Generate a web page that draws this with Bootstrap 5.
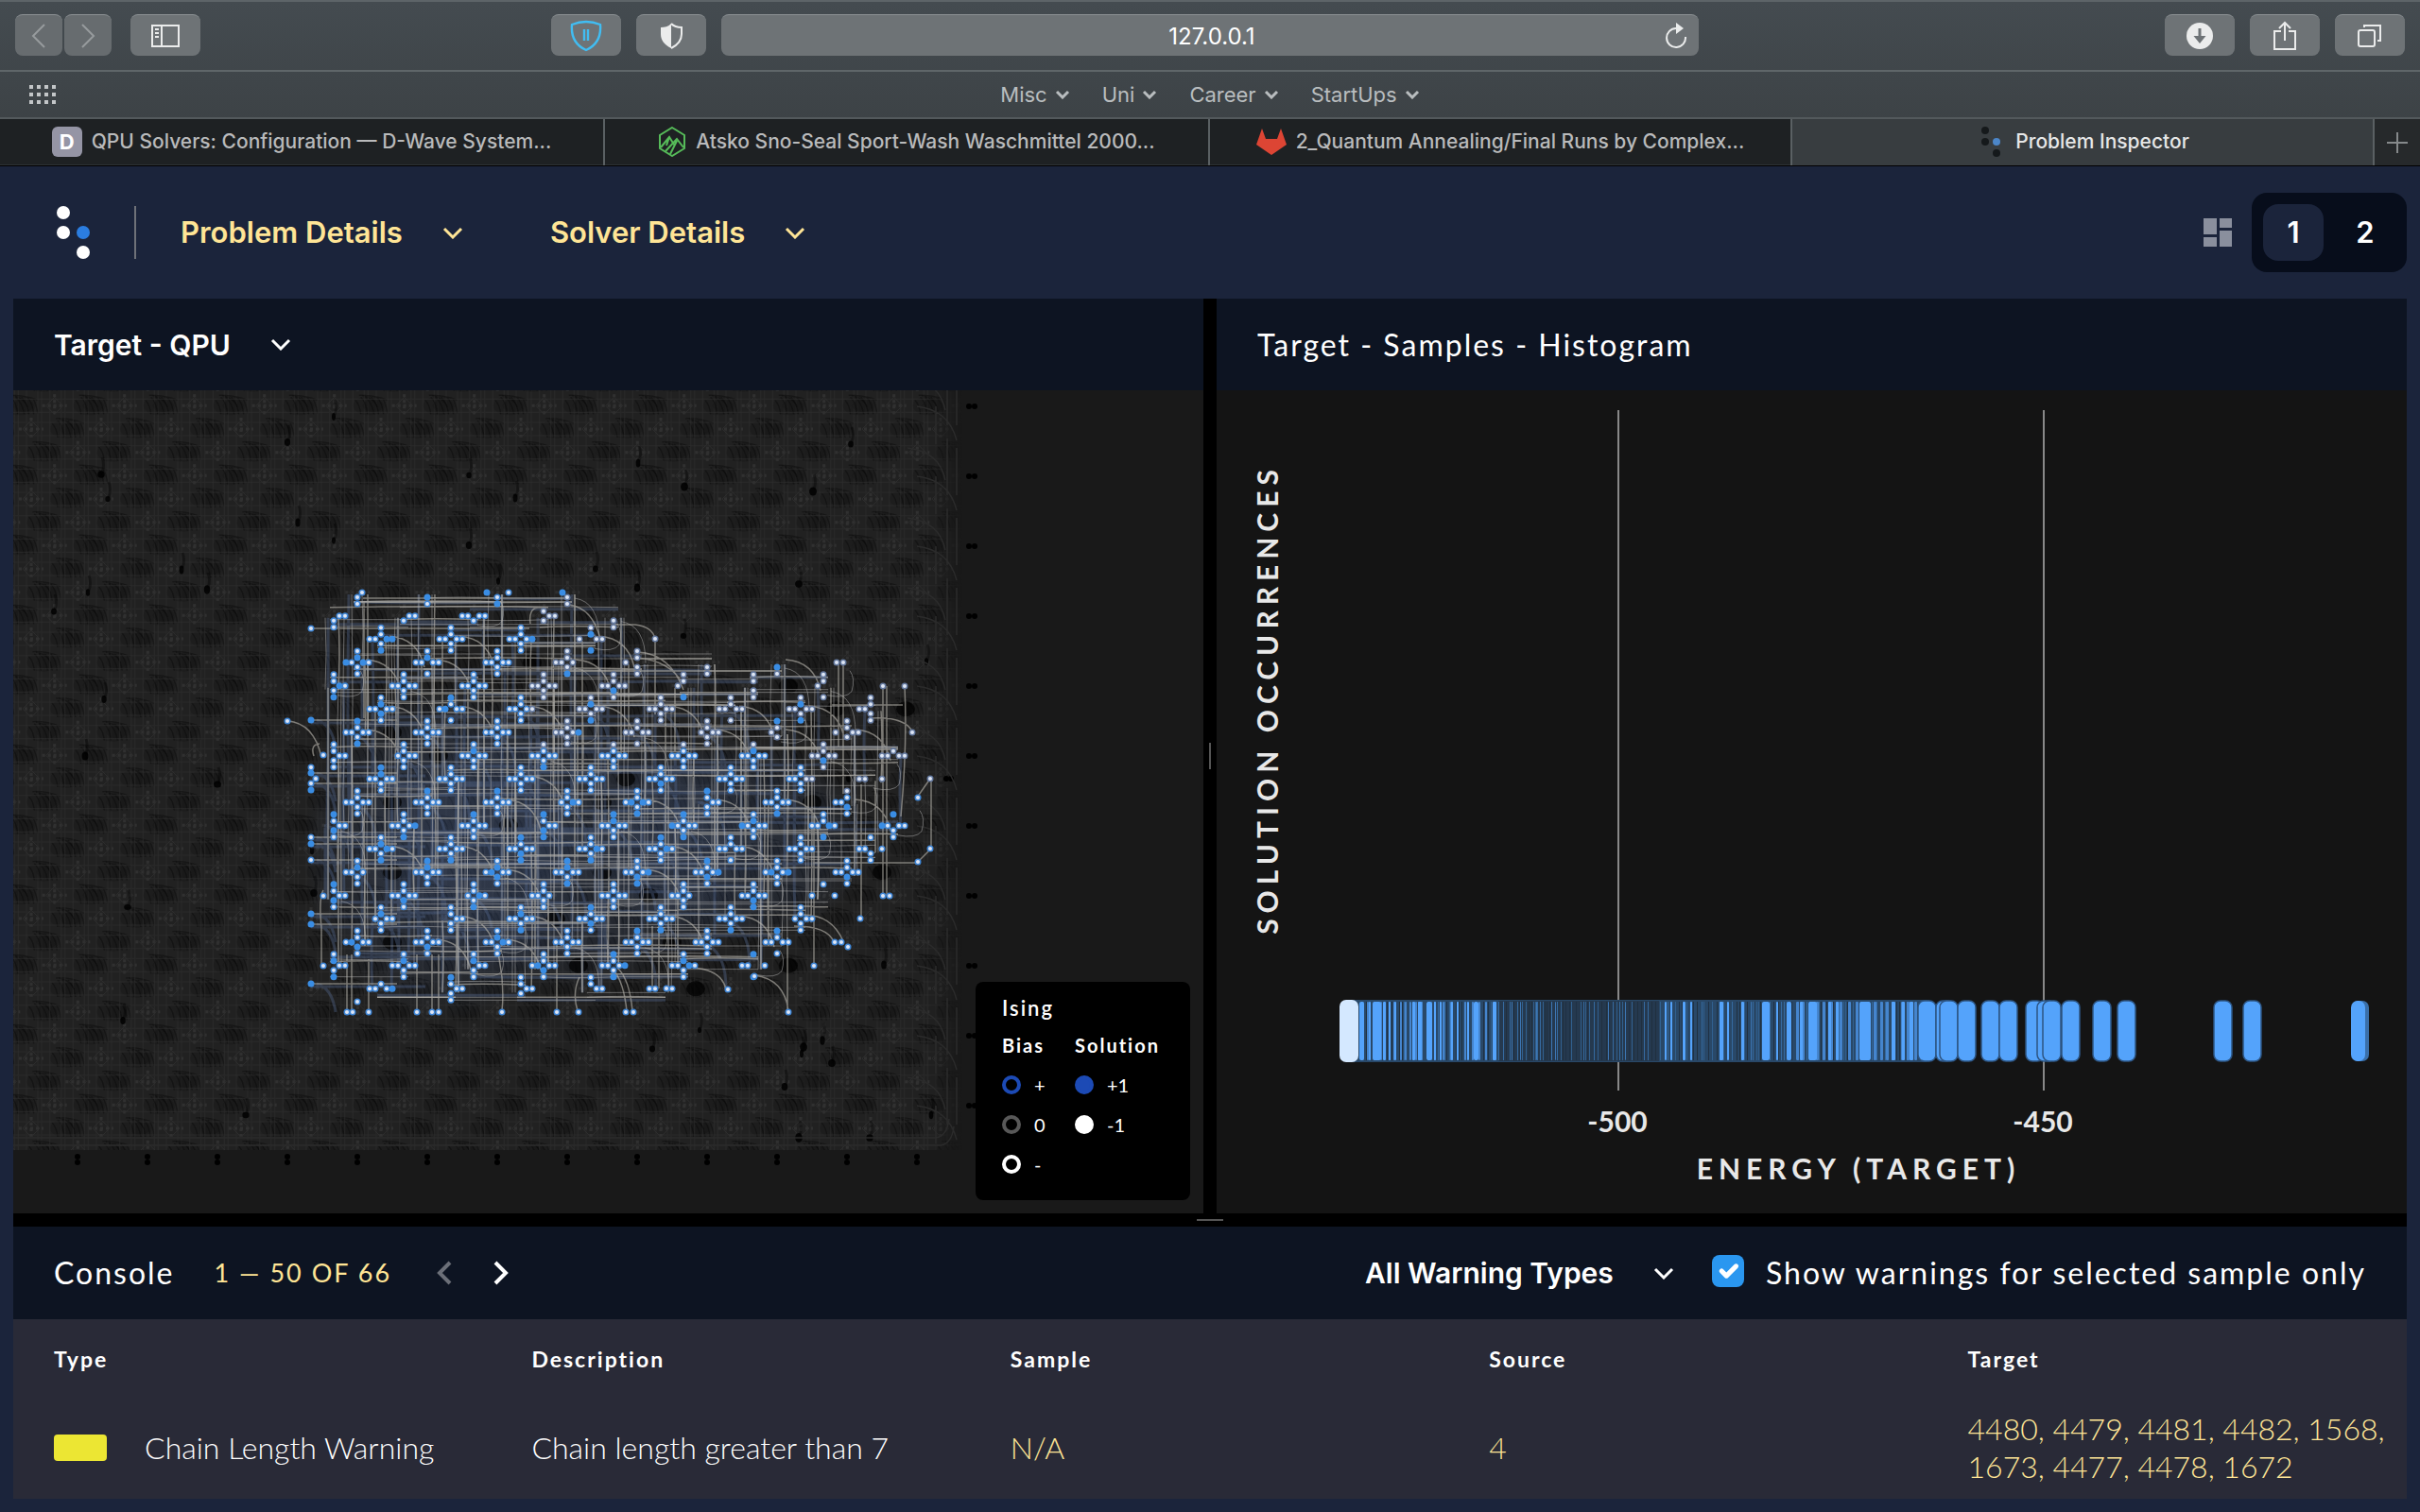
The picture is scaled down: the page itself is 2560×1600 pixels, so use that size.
<!DOCTYPE html>
<html lang="en">
<head>
<meta charset="utf-8">
<meta name="viewport" content="width=device-width, initial-scale=1">
<title>Problem Inspector</title>
<link href="https://cdn.jsdelivr.net/npm/bootstrap@5.3.0/dist/css/bootstrap.min.css" rel="stylesheet">
<style>
  :root { --ui: Inter, Roboto, sans-serif; --brand: Lato, "Open Sans", sans-serif; --navy: #1b243b; --ink: #0d1422; --gold: #ffe596; }
  body { font-family: var(--brand); background: var(--navy); color: #fff; min-height: 100vh; }
  svg { display: block; }
  /* browser chrome */
  .chrome { font-family: var(--ui); font-size: 22px; line-height: 28px; background: linear-gradient(#444b50, #3a3f42); border-top: 2px solid #5d6468; }
  .toolbar { display: grid; grid-template-columns: 583fr 1214fr 763fr; height: 74px; padding-bottom: 2px; border-bottom: 2px solid #5f6669; }
  .tool { width: 74px; height: 44px; padding: 0; border: 0; border-top: 1px solid #8b9093; border-radius: 8px; background: #6e7376; color: #ebecec; display: flex; align-items: center; justify-content: center; }
  .tool-nav { width: 50px; color: #979b9d; background: #676c6f; margin-right: 2px; }
  .tool-nav + .tool-nav { margin-right: 20px; }
  .address { height: 44px; border-top: 1px solid #8b9093; border-radius: 8px; background: #6e7376; }
  .address input { background: none; border: 0; color: #fff; font-size: 24px; line-height: 44px; text-align: center; outline: 0; min-width: 0; padding: 2px 0 0 52px; }
  .address button { color: #ebecec; width: 48px; }
  .favs { height: 48px; color: #b9bdbf; }
  .favs a { color: inherit; text-decoration: none; display: flex; align-items: center; gap: 8px; }
  .tabs { height: 52px; font-size: 21px; font-weight: 500; border-top: 2px solid #53595c; border-bottom: 1px solid #000; background: #1e2123; box-shadow: inset 0 -1px #2e3235; }
  .tab-item { flex: 616 1 0; min-width: 0; color: #b9babb; text-decoration: none; border-right: 2px solid #5a6063; gap: 10px; padding-bottom: 1px; }
  .tab-wide { flex-grow: 640; }
  .tab-on { background: #383d40; color: #e6e7e7; }
  .tab-add { width: 48px; flex: none; color: #85898b; background: #26292b; border: 0; padding: 0; }
  .fav-d { width: 32px; height: 32px; border-radius: 6px; background: #9595a5; color: #fff; font-size: 22px; font-weight: 700; line-height: 32px; text-align: center; }
  /* app */
  .appbar { height: 140px; padding: 0 14px 0 60px; font-family: var(--ui); font-size: 31px; }
  .appbar button { font-weight: 600; }
  .rule { width: 2px; height: 56px; background: #6e7178; margin: 0 47px 0 46px; }
  .menu-btn { color: var(--gold); background: none; border: 0; padding: 0; display: flex; align-items: center; gap: 42px; margin-right: 92px; }
  .views { background: #070d1b; border-radius: 16px; padding: 12px; gap: 12px; margin-left: 21px; }
  .views button { width: 64px; height: 60px; border: 0; border-radius: 16px; background: none; color: #fff; padding: 0; }
  .views .on { background: var(--navy); }
  .stage { padding: 0 14px 14px; }
  .pane-head { height: 97px; background: var(--ink); padding: 0 43px; font-size: 32px; letter-spacing: 2px; }
  .pick { font: 600 30px/40px var(--ui); letter-spacing: 0; color: #fff; border: 0; appearance: none; padding: 0 64px 0 0; outline: 0;
    background: url("data:image/svg+xml,%3Csvg xmlns='http://www.w3.org/2000/svg' width='22' height='13'%3E%3Cpath d='M2 2l9 9 9-9' fill='none' stroke='%23fff' stroke-width='3'/%3E%3C/svg%3E") no-repeat right center; }
  .pick option { color: #000; }
  .split-v { width: 14px; background: #000; flex: none; }
  .split-v i { width: 2px; height: 28px; background: #555; }
  .split-h { height: 14px; background: #000; }
  .split-h i { width: 28px; height: 2px; background: #555; }
  .view { background: #191919; min-height: 400px; overflow: hidden; }
  .view > svg { position: absolute; inset: 0; width: 100%; height: 100%; }
  .chart { background: #141414; }
  .chart text { fill: #e8e8e8; font-family: var(--brand); font-weight: 700; font-size: 30px; text-anchor: middle; }
  .chart .axis { letter-spacing: 6px; }
  .key-box { position: absolute; right: 14px; bottom: 14px; width: 227px; padding: 10px 28px 17px; background: #000; border-radius: 8px; font-size: 20px; line-height: 42px; }
  .key-box h2 { font-size: 22px; line-height: 36px; font-weight: 600; letter-spacing: 2px; margin: 0; }
  .key-box h3 { font-size: 20px; line-height: 42px; font-weight: 700; letter-spacing: 2px; margin: 0; }
  .key-box li { display: flex; align-items: center; gap: 14px; }
  .ring { width: 20px; height: 20px; border: 4px solid #1c4ab5; border-radius: 50%; }
  .ring-zero { border-color: #585858; }
  .ring-neg { border-color: #fff; }
  .fill-pos { background: #1c4ab5; }
  .fill-neg { background: #fff; border-color: #fff; }
  .key-col { width: 77px; }
  .console-head { height: 98px; }
  .count { color: var(--gold); font-size: 27px; margin: 0 48px 0 42px; }
  .pager { background: none; border: 0; padding: 0; color: #fff; }
  .pager:disabled { color: #6b6f78; }
  .pager + .pager { margin-left: 44px; }
  .only { width: 34px; height: 34px; margin: 0 23px 4px 40px; border: 0; border-radius: 5px; flex: none; }
  .only:checked { background-color: #2a97f0; }
  .log { width: 100%; table-layout: fixed; background: #292a37; font-size: 32px; line-height: 40px; }
  .log th { font-size: 23px; line-height: 30px; font-weight: 700; letter-spacing: 2px; height: 84px; padding: 0 0 0 43px; width: 20%; }
  .log th + th, .log td + td { padding-left: 42px; }
  .log td { height: 106px; padding: 0 0 3px 43px; font-weight: 300; }
  .log a { color: #ffe596; text-decoration: none; }
  .swatch { width: 56px; height: 28px; border-radius: 4px; background: #ece633; margin-right: 40px; }
</style>
<script src="https://cdn.jsdelivr.net/npm/bootstrap@5.3.0/dist/js/bootstrap.bundle.min.js"></script>
</head>
<body class="d-flex flex-column">
<header class="chrome">
  <div class="toolbar align-items-center">
    <div class="d-flex align-items-center ps-3">
      <button class="tool tool-nav" aria-label="Back"><svg width="16" height="26" fill="none" stroke="currentColor" stroke-width="2"><path d="M14 1 2 13l12 12"/></svg></button>
      <button class="tool tool-nav" aria-label="Forward"><svg width="16" height="26" fill="none" stroke="currentColor" stroke-width="2"><path d="M2 1l12 12L2 25"/></svg></button>
      <button class="tool" aria-label="Sidebar"><svg width="30" height="24" fill="none" stroke="currentColor" stroke-width="2"><path d="M1 1h28v22H1zM11 1v22M4 5h4M4 9h4M4 13h4"/></svg></button>
    </div>
    <div class="d-flex gap-3 align-items-center">
      <button class="tool" aria-label="Privacy shield"><svg width="34" height="34" fill="none" stroke="#41bdf2" stroke-width="2.4"><path d="M17 2c5 0 10 1 15 3 1 12-4 22-15 27C6 27 1 17 2 5c5-2 10-3 15-3zM15 10v12M19 10v12"/></svg></button>
      <button class="tool" aria-label="Privacy report"><svg width="24" height="28"><path d="M12 1v26C4 23 1 18 1 12V5c4 0 8-1 11-4z" fill="#ebecec"/><path d="M12 1c3 3 7 4 11 4v7c0 6-3 11-11 15" fill="none" stroke="#ebecec" stroke-width="2"/></svg></button>
      <div class="address d-flex flex-grow-1">
        <input class="flex-grow-1" aria-label="Address" value="127.0.0.1">
        <button class="btn p-0 border-0 d-flex align-items-center justify-content-center" aria-label="Reload"><svg width="24" height="28" fill="none" stroke="currentColor" stroke-width="2"><path d="M12 6a10 10 0 1 0 10 9"/><path d="M12 0l8 6-8 6z" fill="currentColor" stroke="none"/></svg></button>
      </div>
    </div>
    <div class="d-flex gap-3 justify-content-end pe-3">
      <button class="tool" aria-label="Downloads"><svg width="28" height="28"><circle cx="14" cy="14" r="14" fill="#ebecec"/><path d="M12.500 6h3v8h5L14 22l-6.500-8h5z" fill="#6e7376"/></svg></button>
      <button class="tool" aria-label="Share"><svg width="24" height="32" fill="none" stroke="currentColor" stroke-width="2"><path d="M8 11H1v19h22V11h-7M12 21V2M6 8l6-6 6 6"/></svg></button>
      <button class="tool" aria-label="Tab overview"><svg width="26" height="26" fill="none" stroke="currentColor" stroke-width="2"><rect x="1" y="7" width="17" height="17" rx="2"/><path d="M7 4V2h17v16h-3"/></svg></button>
    </div>
  </div>
  <nav class="favs position-relative d-flex align-items-center justify-content-center">
    <svg class="position-absolute top-50 start-0 translate-middle-y ms-4" width="38" height="22" fill="#c3c6c8"><path d="M7 1h4v4H7zM15 1h4v4h-4zM23 1h4v4h-4zM31 1h4v4h-4zM7 9h4v4H7zM15 9h4v4h-4zM23 9h4v4h-4zM31 9h4v4h-4zM7 17h4v4H7zM15 17h4v4h-4zM23 17h4v4h-4zM31 17h4v4h-4z"/></svg>
    <div class="d-flex" style="gap:34px">
      <a href="#">Misc <svg width="16" height="10" fill="none" stroke="currentColor" stroke-width="3"><path d="M2 2l6 6 6-6"/></svg></a>
      <a href="#">Uni <svg width="16" height="10" fill="none" stroke="currentColor" stroke-width="3"><path d="M2 2l6 6 6-6"/></svg></a>
      <a href="#">Career <svg width="16" height="10" fill="none" stroke="currentColor" stroke-width="3"><path d="M2 2l6 6 6-6"/></svg></a>
      <a href="#">StartUps <svg width="16" height="10" fill="none" stroke="currentColor" stroke-width="3"><path d="M2 2l6 6 6-6"/></svg></a>
    </div>
  </nav>
  <nav class="tabs d-flex">
    <a href="#" class="tab-item tab-wide d-flex align-items-center justify-content-center"><span class="fav-d">D</span>QPU Solvers: Configuration — D-Wave System...</a>
    <a href="#" class="tab-item tab-wide d-flex align-items-center justify-content-center"><svg width="30" height="32" fill="none" stroke="#56bb59" stroke-width="2"><path d="M15 1l13 8v14l-13 8-13-8V9z"/><path d="M3 22l9-11 5 8M8 26l12-13 7 9M13 29l7-14M12 11l-3 9" /></svg>Atsko Sno-Seal Sport-Wash Waschmittel 2000...</a>
    <a href="#" class="tab-item d-flex align-items-center justify-content-center"><svg width="32" height="30" fill="#dd4534"><path d="M6 1l4 11h12l4-11 6 17-16 11L0 18z"/></svg>2_Quantum Annealing/Final Runs by Complex...</a>
    <a href="#" class="tab-item tab-on d-flex align-items-center justify-content-center"><svg width="32" height="32"><g fill="#15191b"><circle cx="10" cy="4" r="4"/><circle cx="10" cy="16" r="4"/><circle cx="22" cy="28" r="4"/></g><circle cx="22" cy="16" r="4" fill="#4c86c8"/></svg>Problem Inspector</a>
    <button class="tab-add d-flex align-items-center justify-content-center" aria-label="New tab"><svg width="22" height="22" stroke="currentColor" stroke-width="2"><path d="M11 0v22M0 11h22"/></svg></button>
  </nav>
</header>

<nav class="appbar d-flex align-items-center">
  <svg width="36" height="56" fill="#fff"><circle cx="7" cy="7" r="7"/><circle cx="7" cy="28" r="7"/><circle cx="28" cy="28" r="7" fill="#2b7de0"/><circle cx="28" cy="49" r="7"/></svg>
  <div class="rule"></div>
  <button class="menu-btn">Problem Details <svg width="22" height="13" fill="none" stroke="currentColor" stroke-width="3"><path d="M2 2l9 9 9-9"/></svg></button>
  <button class="menu-btn">Solver Details <svg width="22" height="13" fill="none" stroke="currentColor" stroke-width="3"><path d="M2 2l9 9 9-9"/></svg></button>
  <svg class="ms-auto" width="30" height="30" fill="#8a8f9d"><path d="M0 0h14v17H0zM17 0h13v10H17zM0 20h14v10H0zM17 13h13v17H17z"/></svg>
  <div class="views d-flex"><button class="on">1</button><button>2</button></div>
</nav>

<main class="stage d-flex flex-column flex-grow-1">
  <div class="d-flex flex-grow-1">
    <section class="d-flex flex-column" style="flex:1 1 0">
      <div class="pane-head d-flex align-items-center"><select class="pick" aria-label="Left view"><option>Target - QPU</option></select></div>
      <div class="view flex-grow-1 position-relative">
        <svg id="qpu" viewBox="14 413 1259 871" preserveAspectRatio="xMinYMin slice">
          <defs>
            <pattern id="weave" width="74" height="74" patternUnits="userSpaceOnUse" patternTransform="translate(403 676)"></pattern>
            <linearGradient id="fadeX" x1="0" x2="1" y1="0" y2="0"><stop offset=".965" stop-color="#fff"/><stop offset="1" stop-color="#fff" stop-opacity="0"/></linearGradient>
            <mask id="edge"><rect x="14" y="413" width="1004" height="804" fill="url(#fadeX)"/></mask>
            <radialGradient id="haze"><stop offset="0" stop-color="#5c7fc4" stop-opacity=".16"/><stop offset=".7" stop-color="#5c7fc4" stop-opacity=".1"/><stop offset="1" stop-color="#5c7fc4" stop-opacity="0"/></radialGradient>
          </defs>
          <rect x="14" y="413" width="1004" height="804" fill="url(#weave)" mask="url(#edge)"/>
        </svg>
        <div class="key-box">
          <h2>Ising</h2>
          <div class="d-flex">
            <div class="key-col"><h3>Bias</h3><ul class="list-unstyled m-0"><li><span class="ring"></span>+</li><li><span class="ring ring-zero"></span>0</li><li><span class="ring ring-neg"></span>-</li></ul></div>
            <div><h3>Solution</h3><ul class="list-unstyled m-0"><li><span class="ring fill-pos"></span>+1</li><li><span class="ring fill-neg"></span>-1</li></ul></div>
          </div>
        </div>
      </div>
    </section>
    <div class="split-v d-flex align-items-center justify-content-center"><i></i></div>
    <section class="d-flex flex-column" style="flex:1 1 0">
      <div class="pane-head d-flex align-items-center">Target - Samples - Histogram</div>
      <div class="view chart flex-grow-1 position-relative">
        <svg id="hist" viewBox="1287 413 1259 871" preserveAspectRatio="xMidYMid meet">
          <path d="M1712 434V1154M2162 434V1154" stroke="#888" stroke-width="2"/>
          <g id="bars"></g>
          <text x="1711" y="1198">-500</text><text x="2161" y="1198">-450</text>
          <text class="axis" x="1966" y="1248">ENERGY (TARGET)</text>
          <text class="axis" transform="translate(1352 740) rotate(-90)">SOLUTION OCCURRENCES</text>
        </svg>
      </div>
    </section>
  </div>
  <div class="split-h d-flex align-items-center justify-content-center"><i></i></div>
  <section>
    <div class="pane-head console-head d-flex align-items-center">
      <span>Console</span><span class="count">1 — 50 OF 66</span>
      <button class="pager" disabled aria-label="Previous"><svg width="16" height="26" fill="none" stroke="currentColor" stroke-width="4"><path d="M14 2 3 13l11 11"/></svg></button>
      <button class="pager" aria-label="Next"><svg width="16" height="26" fill="none" stroke="currentColor" stroke-width="4"><path d="M2 2l11 11L2 24"/></svg></button>
      <select class="pick ms-auto" aria-label="Warning type"><option>All Warning Types</option></select>
      <input class="form-check-input only" type="checkbox" id="only" checked><label for="only">Show warnings for selected sample only</label>
    </div>
    <table class="log">
      <thead><tr><th>Type</th><th>Description</th><th>Sample</th><th>Source</th><th>Target</th></tr></thead>
      <tbody><tr>
        <td><div class="d-flex align-items-center"><span class="swatch"></span>Chain Length Warning</div></td>
        <td>Chain length greater than 7</td><td><a href="#">N/A</a></td><td><a href="#">4</a></td>
        <td><a href="#">4480, 4479, 4481, 4482, 1568, 1673, 4477, 4478, 1672</a></td>
      </tr></tbody>
    </table>
  </section>
</main>

<script>
let seed = 11;
const rnd = () => (seed = (seed * 16807) % 2147483647) / 2147483647;
const pick = a => a[Math.floor(rnd() * a.length)];
const add = (id, s) => document.getElementById(id).insertAdjacentHTML('beforeend', s);
const S = 74 / 3;

// faint fabric of unused couplers
let w = '<rect width="74" height="74" fill="#212121"/>', base = [[0, 0], [2 * S, S], [S, 2 * S]];
for (const [bx, by] of base) for (const dx of [-74, 0, 74]) for (const dy of [-74, 0, 74]) {
  const x = bx + dx, y = by + dy;
  w += `<g fill="#000"><ellipse cx="${x + 37}" cy="${y}" rx="17" ry="10" opacity=".13"/><ellipse cx="${x + 41}" cy="${y}" rx="11" ry="7" opacity=".13"/></g>`;
  w += `<path d="M${x + 22} ${y - 6}q5 5 6 15M${x + 28} ${y - 9}q6 6 7 18M${x + 33} ${y - 9}q7 6 9 18M${x + 39} ${y - 9}q6 6 8 18M${x + 45} ${y - 9}q6 6 7 18M${x + 51} ${y - 8}q4 6 5 16M${x + 26} ${y - 11}q14 -1 30 5M${x + 5} ${y + 14}q12 2 16 12" fill="none" stroke="#080808" stroke-width="1.500" opacity=".42"/>`;
  w += `<path d="M${x - 13} ${y}h26M${x} ${y - 12}v24" stroke="#303030" stroke-width="3" stroke-dasharray="3 3"/><path d="M${x - 9} ${y}l9-9 9 9-9 9z" fill="none" stroke="#2c2c2c"/><path d="M${x - 37} ${y + 7}h74M${x - 37} ${y - 7}h74M${x - 5} ${y - 37}v74M${x + 7} ${y - 37}v74M${x + 11} ${y - 37}v74" stroke="#2c2c2c" opacity=".6"/>`;
}
document.getElementById('weave').innerHTML = w;

let g = '';
// missing qubits
const holes = [[353, 441], [114, 528], [107, 502], [304, 468], [57, 647], [192, 603], [93, 627], [219, 624], [496, 503], [545, 527], [496, 577], [630, 602], [315, 553], [353, 572], [674, 622], [527, 615], [332, 945], [330, 900], [845, 618], [135, 960], [90, 800], [230, 830], [675, 490], [724, 515], [860, 520], [900, 470], [723, 673], [850, 1108], [870, 1101], [848, 1115], [880, 1125], [830, 1150], [920, 1204], [845, 1204], [935, 1021], [690, 1110], [740, 1090], [260, 1180], [110, 740], [130, 1080], [980, 700], [985, 1180], [898, 823]];
for (const [x, y] of holes) g += `<ellipse cx="${x}" cy="${y}" rx="${2 + rnd() * 2}" ry="${3 + rnd() * 2}" fill="#000" opacity=".85"/><path d="M${x + 1} ${y - 18}q3 8 0 16" stroke="#000" stroke-width="3" fill="none" opacity=".35"/>`;
// border contacts
for (let y = 430; y < 1180; y += 74) g += `<circle cx="1025" cy="${y}" r="3"/><circle cx="1031" cy="${y}" r="3"/>`;
for (let x = 82; x < 980; x += 74) g += `<circle cx="${x}" cy="1224" r="3"/><circle cx="${x}" cy="1230" r="3"/>`;
g += '<circle cx="1001" cy="824" r="3"/><circle cx="1006" cy="824" r="3"/>';
let loops = '';
for (let y = 430; y < 1190; y += 74) loops += `M960 ${y - 30}q34 4 40 34M970 ${y}q34 4 42 36M1012 ${y - 30}v50M1002 ${y - 40}v60M990 ${y}v40`;
g += `<path d="${loops}M14 1212H995q12-2 14-20M14 1204H990q12-2 14-20" fill="none" stroke="#2b2b2b" stroke-width="1.500"/>`;

// unit cells in use: first column and number of cells for each lattice row
const rows = [[378, 4], [353, 5], [403, 4], [378, 7], [353, 8], [403, 8], [378, 8], [353, 9], [403, 8], [378, 8], [353, 9], [403, 8], [378, 8], [353, 8], [403, 7], [378, 7], [353, 7], [403, 5]];
const partial = { '0,0': 'cd', '0,1': 'cd', '0,2': 'cd', '0,3': 'cd', '1,0': 'yzcd', '1,1': 'yzc', '1,2': 'wxyzc', '1,3': 'bcyz', '1,4': 'cd', '2,3': 'abyzwd', '3,4': 'abcdw', '3,5': 'cd', '3,6': 'cd', '4,5': 'abxd', '4,6': 'abcd', '4,7': 'abxd', '5,7': 'abwxcd', '6,7': 'abwyzc', '6,6': 'abxc', '7,8': 'bwxyz', '8,7': 'wxz', '9,7': 'abwxcd', '10,8': 'awxyzcd', '11,7': 'awxzcd', '13,7': 'awz', '16,6': 'awxzd', '17,0': 'bwxyz', '17,1': 'abcdyz', '17,2': 'abcyz', '17,3': 'abyz', '17,4': 'wxz' };
for (const k of [4, 7, 10, 13, 16]) partial[k + ',0'] = 'abcdyz';
const off = { a: [0, -12], b: [0, -5], c: [0, 5], d: [0, 12], w: [-12, 0], x: [-6, 0], y: [6, 0], z: [12, 0] };
const cells = [], at = new Set();
rows.forEach(([x0, n], k) => { for (let i = 0; i < n; i++) { const c = { k, i, x: x0 + 74 * i, y: 627 + S * k }; cells.push(c); at.add(Math.round(c.x) + ',' + k); } });
const has = (x, k) => at.has(Math.round(x) + ',' + k);

g += '<ellipse cx="470" cy="900" rx="150" ry="180" fill="url(#haze)"/><ellipse cx="590" cy="900" rx="220" ry="150" fill="url(#haze)"/><ellipse cx="770" cy="890" rx="150" ry="110" fill="url(#haze)"/>';
for (const c of cells) if (rnd() < .22 && c.k) g += `<ellipse cx="${c.x + 37}" cy="${c.y}" rx="10" ry="8" fill="#000" opacity=".7"/>`;
let thin = '', bold = '', blue = '';
for (const c of cells) {
  for (let r = 0; r < 4; r++) {
    const n = pick([1, 1, 2, 3]), o = c.k ? pick([-9, -7, -4, 4, 7, 9, 12]) : pick([6, 10]);
    if (has(c.x + 74 * n, c.k)) { const s = `M${c.x - 4} ${c.y + o}q${37 * n} ${pick([-2, 0, 0, 2])} ${74 * n + 9} 0`; if (r > 1) thin += s; else if (r) bold += s; else blue += s; }
    const m = pick([1, 1, 2, 3]), p = pick([-9, -6, 5, 8, 11]);
    if (has(c.x, c.k + 3 * m)) { const s = `M${c.x + p} ${c.y + 2}q${pick([-2, 0, 0, 2])} ${37 * m} 0 ${74 * m + 2}`; if (r > 1) thin += s; else if (r) bold += s; else blue += s; }
  }
  if (rnd() < .45 && has(c.x + 49, c.k + 1)) bold += `M${c.x + 9} ${c.y - 3}q30 2 37 ${S + 8}`;
  if (rnd() < .25 && has(c.x + 25, c.k + 2)) thin += `M${c.x + 8} ${c.y + 6}q26 4 26 44`;
  if (rnd() < .18 && c.k) thin += `M${c.x + 4} ${c.y + 10}q20 4 26 -4q4 -14 -2 -22`;
}
for (let i = 0; i < 140; i++) { const c = pick(cells); if (c.i < 6 && c.k > 4 && c.k < 16) blue += `M${c.x - 10} ${c.y}q30 4 30 50`; }
for (const y of [762, 818, 829, 886, 893, 910, 967, 978, 1041]) { bold += `M329 ${y}H420`; blue += `M329 ${y + 3}H450M335 ${y}q16 4 20 30`; }
bold += 'M329 665H560M384 633H600M384 637H595M385 636V760M650 661h22q18 2 21 15V756M603 640q24 4 32 36M561 660q-2-16 8-17h9M675 690q34 2 48 40M675 696q34 4 46 26M304 763q28 2 36 38M332 800q-4-12 6-13M984 824l-14 20M985 824V898l-14 14M970 913H860M934 726V948M938 726V948M957 726q3 60-4 138M887 702V790M892 702V840M921 760q36-2 44 14M955 746H880M911 830V972M861 860V1020M342 942q-5 8-2 40V1022M833 992V1070M834 1070q-4-34-36-38M850 968q30 0 42 28M840 980q36 0 42 17M768 1047q-4-20-34-23M367 1070V1010M372 1070V1010M390 1070V1015M441 1070V1010M457 1070V1010M464 1070V1010M531 1070q3-30-4-60M589 1070V1000M611 1070q-6-20 2-36M663 1070q-3-30-14-44M669 1070q-3-34-16-46M690 1046V980M697 1046V980';
g += `<g fill="none"><path d="${blue}" stroke="#53678d" stroke-width="3" opacity=".4"/><path d="${thin}" stroke="#b4b4b4" stroke-width="1" opacity=".5"/><path d="${bold}" stroke="#b8b4ad" stroke-width="1.500" opacity=".62"/></g>`;

let dots = '';
function dot(x, y, b) {
  dots += b ? `<circle cx="${x}" cy="${y}" r="3.500" fill="#3a8de4"/>` : `<circle cx="${x}" cy="${y}" r="3.500" fill="${x > 850 && y < 840 || y < 790 && x > 560 ? '#64799f' : '#3f86d6'}"/><circle cx="${x}" cy="${y}" r="2" fill="#dfe7f5"/>`;
}
for (const c of cells) {
  const left = c.x < 420, arms = partial[c.k + ',' + c.i] || (rnd() < .3 ? pick(['abcdyz', 'abcdwxy', 'abcdxyz', 'abdwxyz']) : 'abcdwxyz');
  const bl = left ? .4 : c.y > 840 ? .28 : .14;
  for (const a of arms) dot(c.x + off[a][0], c.y + off[a][1], rnd() < ('abcd'.includes(a) ? bl : bl / 3));
}
const stray = [[383, 627], [515, 627, 1], [538, 627], [595, 627, 1], [329, 665], [693, 676], [304, 763], [329, 762, 1], [885, 701], [892, 701], [934, 726], [957, 726], [965, 775], [984, 824], [971, 844], [984, 898], [971, 912], [934, 948], [941, 948], [910, 972], [861, 1022], [883, 997], [890, 997], [897, 1002], [834, 1071], [770, 1047], [798, 1033], [342, 799], [329, 812], [329, 818, 1], [334, 824], [329, 829], [329, 836, 1], [329, 886], [329, 893, 1], [329, 910], [342, 948], [329, 967, 1], [329, 978, 1], [342, 1022], [329, 1041, 1], [378, 1060], [705, 1046]];
for (const s of stray) dot(...s);
for (const x of [367, 373, 390, 441, 457, 464, 531, 589, 612, 662, 670]) dot(x, 1071);
add('qpu', g + dots);

// histogram: energies of the samples
let h = '<rect x="1420" y="1058" width="626" height="66" rx="8" fill="#294868"/><rect x="1585" y="1059" width="170" height="64" fill="#25394f"/>';
for (let x = 1440; x < 2030; x += 2 + Math.floor(rnd() * 4)) h += `<rect x="${x}" y="1060" width="1" height="62" fill="${pick(['#356aa0', '#20303f', '#31608f', '#1f3145'])}"/>`;
for (let x = 1440; x < 1585; x += 5 + Math.floor(rnd() * 5)) h += `<rect x="${x}" y="1060" width="2" height="62" rx="1" fill="#4585ce"/>`;
for (let x = 1900; x < 2032; x += 6 + Math.floor(rnd() * 5)) h += `<rect x="${x}" y="1060" width="3" height="62" rx="1" fill="#4585ce"/>`;
for (const [x, n] of [[1438, 5], [1448, 2], [1452, 9], [1463, 3], [1469, 2], [1475, 2], [1494, 3], [1500, 4], [1509, 6], [1517, 2], [1523, 2], [1535, 2], [1541, 2], [1552, 2], [1559, 5], [1579, 4], [1599, 1], [1608, 1], [1625, 1], [1641, 1], [1645, 1], [1701, 1], [1719, 1], [1761, 2], [1767, 2], [1780, 3], [1788, 2], [1819, 4], [1827, 2], [1842, 3], [1852, 1], [1864, 8], [1879, 2], [1890, 5], [1904, 3], [1913, 9], [1934, 3], [1942, 3], [1967, 12], [2001, 4], [2012, 3], [2020, 4]])
  h += `<rect x="${x}" y="1060" width="${n}" height="62" rx="${n > 4 ? 2 : 1}" fill="${n > 1 ? '#54a3fb' : '#3d76b3'}"/>`;
for (const x of [2029, 2048, 2052, 2071, 2096, 2115, 2143, 2155, 2161, 2181, 2214, 2240, 2342, 2373])
  h += `<rect x="${x}" y="1059" width="19" height="64" rx="7" fill="#54a3fb" stroke="#2d5583" stroke-width="1.500"/>`;
h += '<rect x="2488" y="1059" width="18" height="64" rx="7" fill="#3a6fa9"/><rect x="2487" y="1059" width="15" height="64" rx="7" fill="#54a3fb"/><rect x="1417" y="1058" width="20" height="66" rx="7" fill="#d4e8ff"/>';
add('bars', h);
</script>
</body>
</html>
